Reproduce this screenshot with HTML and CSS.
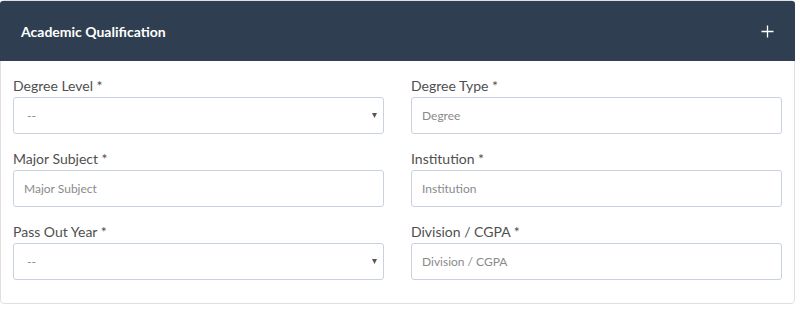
FILE: index.html
```html
<!DOCTYPE html>
<html>
<head>
<meta charset="utf-8">
<link rel="stylesheet" href="styles.css">
</head>
<body>
<div class="panel">
  <div class="panel-head">
    <span class="title">Academic Qualification</span>
    <svg class="plus" width="13" height="13" viewBox="0 0 13 13"><path d="M6.5 0.5v12M0.5 6.5h12" stroke="#fff" stroke-width="1.3" fill="none"/></svg>
  </div>
  <div class="panel-body">
    <div class="field">
      <label class="lbl">Degree Level *</label>
      <div class="select-wrap">
        <select class="ctrl sel"><option>--</option></select>
        <svg class="caret" width="5" height="5" viewBox="0 0 5 5"><path d="M0 0h5L2.5 5z" fill="#555"/></svg>
      </div>
    </div>
    <div class="field">
      <label class="lbl">Degree Type *</label>
      <input class="ctrl" type="text" placeholder="Degree">
    </div>
    <div class="field">
      <label class="lbl">Major Subject *</label>
      <input class="ctrl" type="text" placeholder="Major Subject">
    </div>
    <div class="field">
      <label class="lbl">Institution *</label>
      <input class="ctrl" type="text" placeholder="Institution">
    </div>
    <div class="field">
      <label class="lbl">Pass Out Year *</label>
      <div class="select-wrap">
        <select class="ctrl sel"><option>--</option></select>
        <svg class="caret" width="5" height="5" viewBox="0 0 5 5"><path d="M0 0h5L2.5 5z" fill="#555"/></svg>
      </div>
    </div>
    <div class="field">
      <label class="lbl">Division / CGPA *</label>
      <input class="ctrl" type="text" placeholder="Division / CGPA">
    </div>
  </div>
</div>
</body>
</html>
```
FILE: styles.css
```css
* { box-sizing: border-box; }
body {
  margin: 0;
  background: #fff;
  font-family: "Lato", "Open Sans", sans-serif;
}
.panel {
  width: 795px;
  border: 1px solid #e0e0e0;
  border-radius: 4px;
  background: #fff;
}
.panel-head {
  height: 60px;
  margin: 0 -1px;
  background: #2f3f51;
  display: flex;
  align-items: center;
  justify-content: space-between;
  padding: 0 21px 0 21px;
  border-radius: 3px 3px 0 0;
}
.title {
  color: #fff;
  font-size: 14px;
  font-weight: 700;
}
.plus { display: block; }
.panel-body {
  display: grid;
  grid-template-columns: 1fr 1fr;
  column-gap: 27px;
  row-gap: 15px;
  padding: 15px 12px 23px 12px;
}
.field { display: flex; flex-direction: column; }
.lbl {
  font-size: 14px;
  line-height: 20px;
  color: #4f4f4f;
  margin-bottom: 1px;
}
.ctrl {
  height: 37px;
  width: 100%;
  border: 1px solid #c8d2de;
  border-radius: 3px;
  background: #fff;
  font-family: inherit;
  font-size: 12px;
  color: #555;
  padding: 0 10px;
  outline: none;
}
.ctrl::placeholder { color: #8a8a8a; }
.select-wrap { position: relative; }
.sel {
  appearance: none;
  -webkit-appearance: none;
  padding-left: 13px;
  color: #888;
}
.caret {
  position: absolute;
  right: 7px;
  top: 16px;
}
```
